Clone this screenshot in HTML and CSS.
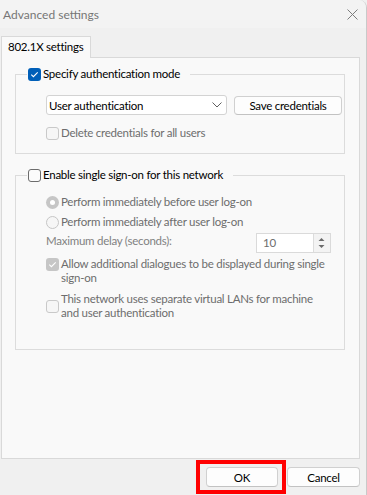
FILE: index.html
```html
<!DOCTYPE html>
<html>
<head>
<meta charset="utf-8">
<link rel="stylesheet" href="styles.css">
</head>
<body>
<div class="window">
  <div class="titlebar">
    <span class="title">Advanced settings</span>
    <svg class="close" width="11" height="11" viewBox="0 0 11 11"><path d="M0.5 0.5 L10.5 10.5 M10.5 0.5 L0.5 10.5" stroke="#7c7c7c" stroke-width="1" fill="none"/></svg>
  </div>
  <div class="tabs">
    <div class="tab">802.1X settings</div>
  </div>
  <div class="panel">
    <div class="group g1">
      <div class="group-head">
        <span class="box checked"><svg width="13" height="13" viewBox="0 0 13 13"><path d="M3.3 6.7 L5.4 8.7 L9.7 4.3" stroke="#fff" stroke-width="1.1" fill="none"/></svg></span>
        <span class="label">Specify authentication mode</span>
      </div>
      <div class="auth-row">
        <div class="select">
          <span>User authentication</span>
          <svg class="chev" width="10" height="6" viewBox="0 0 10 6"><path d="M0.5 0.5 L5 5 L9.5 0.5" stroke="#5f5f5f" stroke-width="1" fill="none"/></svg>
        </div>
        <button class="btn save">Save credentials</button>
      </div>
      <div class="opt disabled del">
        <span class="box dis"></span>
        <span class="label">Delete credentials for all users</span>
      </div>
    </div>

    <div class="group g2">
      <div class="group-head">
        <span class="box empty"></span>
        <span class="label">Enable single sign-on for this network</span>
      </div>
      <div class="opt disabled r1">
        <span class="radio on"></span>
        <span class="label">Perform immediately before user log-on</span>
      </div>
      <div class="opt disabled r2">
        <span class="radio"></span>
        <span class="label">Perform immediately after user log-on</span>
      </div>
      <div class="delay-row">
        <span class="delay-label">Maximum delay (seconds):</span>
        <div class="spin">
          <span class="spin-val">10</span>
          <div class="spin-btns">
            <svg width="15" height="8" viewBox="0 0 15 8"><path d="M4.5 6 L7.5 3 L10.5 6 Z" fill="#6a6a6a"/></svg>
            <svg width="15" height="8" viewBox="0 0 15 8"><path d="M4.5 2 L7.5 5 L10.5 2 Z" fill="#6a6a6a"/></svg>
          </div>
        </div>
      </div>
      <div class="opt disabled multi top allow">
        <span class="box dis checked-dis"><svg width="13" height="13" viewBox="0 0 13 13"><path d="M3.3 6.7 L5.4 8.7 L9.7 4.3" stroke="#fff" stroke-width="1.1" fill="none"/></svg></span>
        <span class="label">Allow additional dialogues to be displayed during single<br>sign-on</span>
      </div>
      <div class="opt disabled multi vlan">
        <span class="box dis"></span>
        <span class="label">This network uses separate virtual LANs for machine<br>and user authentication</span>
      </div>
    </div>
  </div>
  <div class="footer">
    <div class="highlight">
      <button class="btn ok">OK</button>
    </div>
    <button class="btn cancel">Cancel</button>
  </div>
</div>
</body>
</html>
```

FILE: styles.css
```css
* { box-sizing: border-box; }

body {
  margin: 0;
  font-family: Lato, "Liberation Sans", sans-serif;
  font-size: 11.5px;
  letter-spacing: -0.25px;
  color: #1a1a1a;
  background: #f0f0f0;
}

.window {
  width: 367px;
  height: 495px;
  background: #f0f0f0;
  border-right: 1px solid #c9c9c9;
  border-top-right-radius: 8px;
  overflow: hidden;
  display: flex;
  flex-direction: column;
}

.titlebar {
  height: 28px;
  flex: none;
  display: flex;
  align-items: center;
  padding-left: 3px;
  background: #f3f3f3;
  color: #767676;
  font-size: 12px;
  letter-spacing: 0;
}

.close {
  margin-left: auto;
  margin-right: 8px;
}

.tabs {
  flex: none;
  display: flex;
  padding-top: 8px;
  padding-left: 1px;
  position: relative;
  z-index: 1;
}

.tab {
  width: 90px;
  height: 22px;
  margin-bottom: -1px;
  border: 1px solid #d9d9d9;
  border-bottom: none;
  background: #f9f9f9;
  padding: 0 0 2px 6px;
  line-height: 19px;
  color: #000;
  white-space: nowrap;
}

.panel {
  flex: none;
  margin-left: 1px;
  width: 359px;
  height: 402px;
  border: 1px solid #d9d9d9;
  background: #f9f9f9;
}

.group {
  border: 1px solid #dcdcdc;
  margin-left: 13px;
  width: 330px;
  padding-left: 30px;
  padding-right: 2px;
}

.g1 {
  margin-top: 16px;
  padding-bottom: 13px;
}

.g2 {
  margin-top: 21px;
  padding-right: 13px;
  padding-bottom: 29px;
}

.group-head {
  display: flex;
  width: max-content;
  align-items: center;
  height: 14px;
  line-height: 14px;
  margin-top: -8px;
  margin-left: -19px;
  padding: 0 10px 0 1px;
  background: #f9f9f9;
  color: #000;
  white-space: nowrap;
}

.group-head .label {
  margin-left: 2px;
}

.box {
  flex: none;
  width: 13px;
  height: 13px;
  border-radius: 3px;
  display: inline-flex;
}

.box.checked {
  background: #005fb8;
  border: none;
}

.box.empty {
  border: 1px solid #6c6c6c;
  background: #fbfbfb;
}

.box.dis {
  border: 1px solid #c9c9c9;
  background: #f6f6f6;
}

.box.checked-dis {
  background: #c6c6c6;
  border: none;
}

.auth-row {
  display: flex;
  margin-top: 14px;
  height: 20px;
}

.select {
  flex: none;
  width: 181px;
  height: 20px;
  border: 1px solid #d3d3d3;
  border-radius: 3px;
  background: #fff;
  display: flex;
  align-items: center;
  padding-left: 2px;
  padding-right: 4px;
  color: #000;
}

.chev {
  margin-left: auto;
}

.btn {
  font: inherit;
  letter-spacing: inherit;
  color: #000;
  background: #fdfdfd;
  border: 1px solid #d0d0d0;
  border-bottom-color: #c2c2c2;
  border-radius: 4px;
  height: 20px;
  padding: 0;
  line-height: 17px;
}

.save {
  flex: none;
  width: 108px;
  margin-left: 7px;
  height: 19px;
  margin-top: 1px;
}

.opt {
  display: flex;
  align-items: center;
  line-height: 14px;
}

.opt .label {
  margin-left: 2px;
  white-space: nowrap;
}

.disabled {
  color: #6d6d6d;
}

.del {
  margin-top: 11px;
}

.radio {
  flex: none;
  width: 13px;
  height: 13px;
  border-radius: 50%;
  border: 1px solid #c6c6c6;
  background: #f6f6f6;
  display: inline-flex;
  align-items: center;
  justify-content: center;
}

.radio.on {
  background: #c6c6c6;
  border: none;
}

.radio.on::after {
  content: "";
  width: 5px;
  height: 5px;
  border-radius: 50%;
  background: #fff;
}

.r1 {
  margin-top: 13px;
}

.r2 {
  margin-top: 6px;
}

.delay-row {
  display: flex;
  align-items: flex-start;
  margin-top: 4px;
  height: 20px;
}

.delay-label {
  padding-top: 1px;
  line-height: 14px;
  color: #818181;
}

.spin {
  margin-left: auto;
  width: 75px;
  height: 20px;
  border: 1px solid #dadada;
  background: #fff;
  display: flex;
}

.spin-val {
  padding-left: 6px;
  line-height: 18px;
  color: #6d6d6d;
  flex: 1;
}

.spin-btns {
  width: 17px;
  border-left: 1px solid #dcdcdc;
  background: #f3f3f3;
  display: flex;
  flex-direction: column;
  justify-content: space-between;
  padding: 1px 0;
}

.spin-btns svg {
  display: block;
}

.multi .label {
  line-height: 14px;
}

.top {
  align-items: flex-start;
}

.top .box {
  margin-top: 1px;
}

.allow {
  margin-top: 4px;
}

.vlan {
  margin-top: 7px;
}

.footer {
  flex: 1;
  display: flex;
  justify-content: flex-end;
  align-items: center;
  padding-right: 6px;
}

.highlight {
  border: 4px solid #ff0000;
  padding: 3px 4px 3px 6px;
}

.ok {
  width: 72px;
  display: block;
}

.cancel {
  width: 73px;
  margin-left: 1px;
}
```
